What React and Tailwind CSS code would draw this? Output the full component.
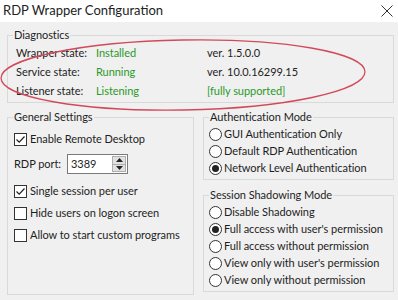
const font = { fontFamily: 'Lato, "Liberation Sans", sans-serif' };

function CheckBox({ checked, label }) {
  return (
    <div className="flex h-[22px] items-center">
      <span className="flex h-[13px] w-[13px] shrink-0 items-center justify-center border border-[#333] bg-white">
        {checked && (
          <svg width="11" height="11" viewBox="0 0 11 11">
            <path d="M1.5 5.5 L4.2 8.2 L9.5 2.5" fill="none" stroke="#222" strokeWidth="1.2" />
          </svg>
        )}
      </span>
      <span className="ml-[3px]">{label}</span>
    </div>
  );
}

function Radio({ checked, label }) {
  return (
    <div className="flex h-[17px] items-center">
      <span className="flex h-[13px] w-[13px] shrink-0 items-center justify-center rounded-full border border-[#333] bg-white">
        {checked && <span className="h-[7px] w-[7px] rounded-full bg-[#222]" />}
      </span>
      <span className="ml-[2px]">{label}</span>
    </div>
  );
}

function Group({ title, className, children }) {
  return (
    <fieldset className={`border border-[#d9d9d9] pl-[5px] ${className}`}>
      <legend className="h-[16px] px-[1px] leading-[16px]">{title}</legend>
      {children}
    </fieldset>
  );
}

export default function App() {
  return (
    <div className="relative h-[300px] w-[398px] overflow-hidden whitespace-nowrap bg-[#f0f0f0] text-[11px] tracking-[-0.05px] text-[#1e1e1e]" style={font}>
      {/* title bar */}
      <div className="flex h-[22px] items-center justify-between bg-white pl-[3px] pr-[5px]">
        <span className="text-[13px] tracking-normal text-[#222]">RDP Wrapper Configuration</span>
        <svg width="12" height="12" viewBox="0 0 12 12">
          <path d="M0.5 0.5 L11.5 11.5 M11.5 0.5 L0.5 11.5" stroke="#333" strokeWidth="1" />
        </svg>
      </div>

      <div className="pl-[7px] pr-[4px] pt-[5px]">
        <Group title="Diagnostics" className="pb-[2px]">
          <div className="grid grid-cols-[80px_111px_1fr] pl-[3px]">
            <div className="h-[19px] leading-[19px]">Wrapper state:</div>
            <div className="h-[19px] leading-[19px] text-[#2a9a2a]">Installed</div>
            <div className="h-[19px] leading-[19px]">ver. 1.5.0.0</div>
            <div className="h-[19px] leading-[19px]">Service state:</div>
            <div className="h-[19px] leading-[19px] text-[#2a9a2a]">Running</div>
            <div className="h-[19px] leading-[19px]">ver. 10.0.16299.15</div>
            <div className="h-[19px] leading-[19px]">Listener state:</div>
            <div className="h-[19px] leading-[19px] text-[#2a9a2a]">Listening</div>
            <div className="h-[19px] leading-[19px] text-[#2a9a2a]">[fully supported]</div>
          </div>
        </Group>

        <div className="mt-[6px] flex gap-[9px]">
          <Group title="General Settings" className="h-[186px] w-[187px]">
            <div className="pl-[1px] pt-[3px]">
              <CheckBox checked label="Enable Remote Desktop" />
              <div className="mt-[4px] flex h-[20px] items-center">
                <span>RDP port:</span>
                <div className="ml-[6px] flex h-[20px] w-[61px] items-center justify-between border border-[#7a7a7a] bg-white pl-[3px] pr-[1px]">
                  <span>3389</span>
                  <div className="flex h-[16px] w-[14px] flex-col border border-[#adadad] bg-[#e1e1e1]">
                    <div className="flex flex-1 items-center justify-center border-b border-[#adadad]">
                      <svg width="7" height="4" viewBox="0 0 7 4"><path d="M0 4 L3.5 0 L7 4 Z" fill="#222" /></svg>
                    </div>
                    <div className="flex flex-1 items-center justify-center">
                      <svg width="7" height="4" viewBox="0 0 7 4"><path d="M0 0 L3.5 4 L7 0 Z" fill="#222" /></svg>
                    </div>
                  </div>
                </div>
              </div>
              <div className="mt-[6px]">
                <CheckBox checked label="Single session per user" />
                <CheckBox label="Hide users on logon screen" />
                <CheckBox label="Allow to start custom programs" />
              </div>
            </div>
          </Group>

          <div className="flex flex-1 flex-col">
            <Group title="Authentication Mode" className="pb-[2px]">
              <div className="pt-[1px]">
                <Radio label="GUI Authentication Only" />
                <Radio label="Default RDP Authentication" />
                <Radio checked label="Network Level Authentication" />
              </div>
            </Group>
            <Group title="Session Shadowing Mode" className="mt-[7px] pb-[2px]">
              <div className="pt-[1px]">
                <Radio label="Disable Shadowing" />
                <Radio checked label="Full access with user's permission" />
                <Radio label="Full access without permission" />
                <Radio label="View only with user's permission" />
                <Radio label="View only without permission" />
              </div>
            </Group>
          </div>
        </div>
      </div>

      {/* hand-drawn annotation circling the diagnostics */}
      <svg className="pointer-events-none absolute left-0 top-0" width="398" height="300">
        <ellipse cx="183" cy="75" rx="182" ry="35" fill="none" stroke="#d24a5a" strokeWidth="1.3" transform="rotate(-1 183 75)" />
      </svg>
    </div>
  );
}
